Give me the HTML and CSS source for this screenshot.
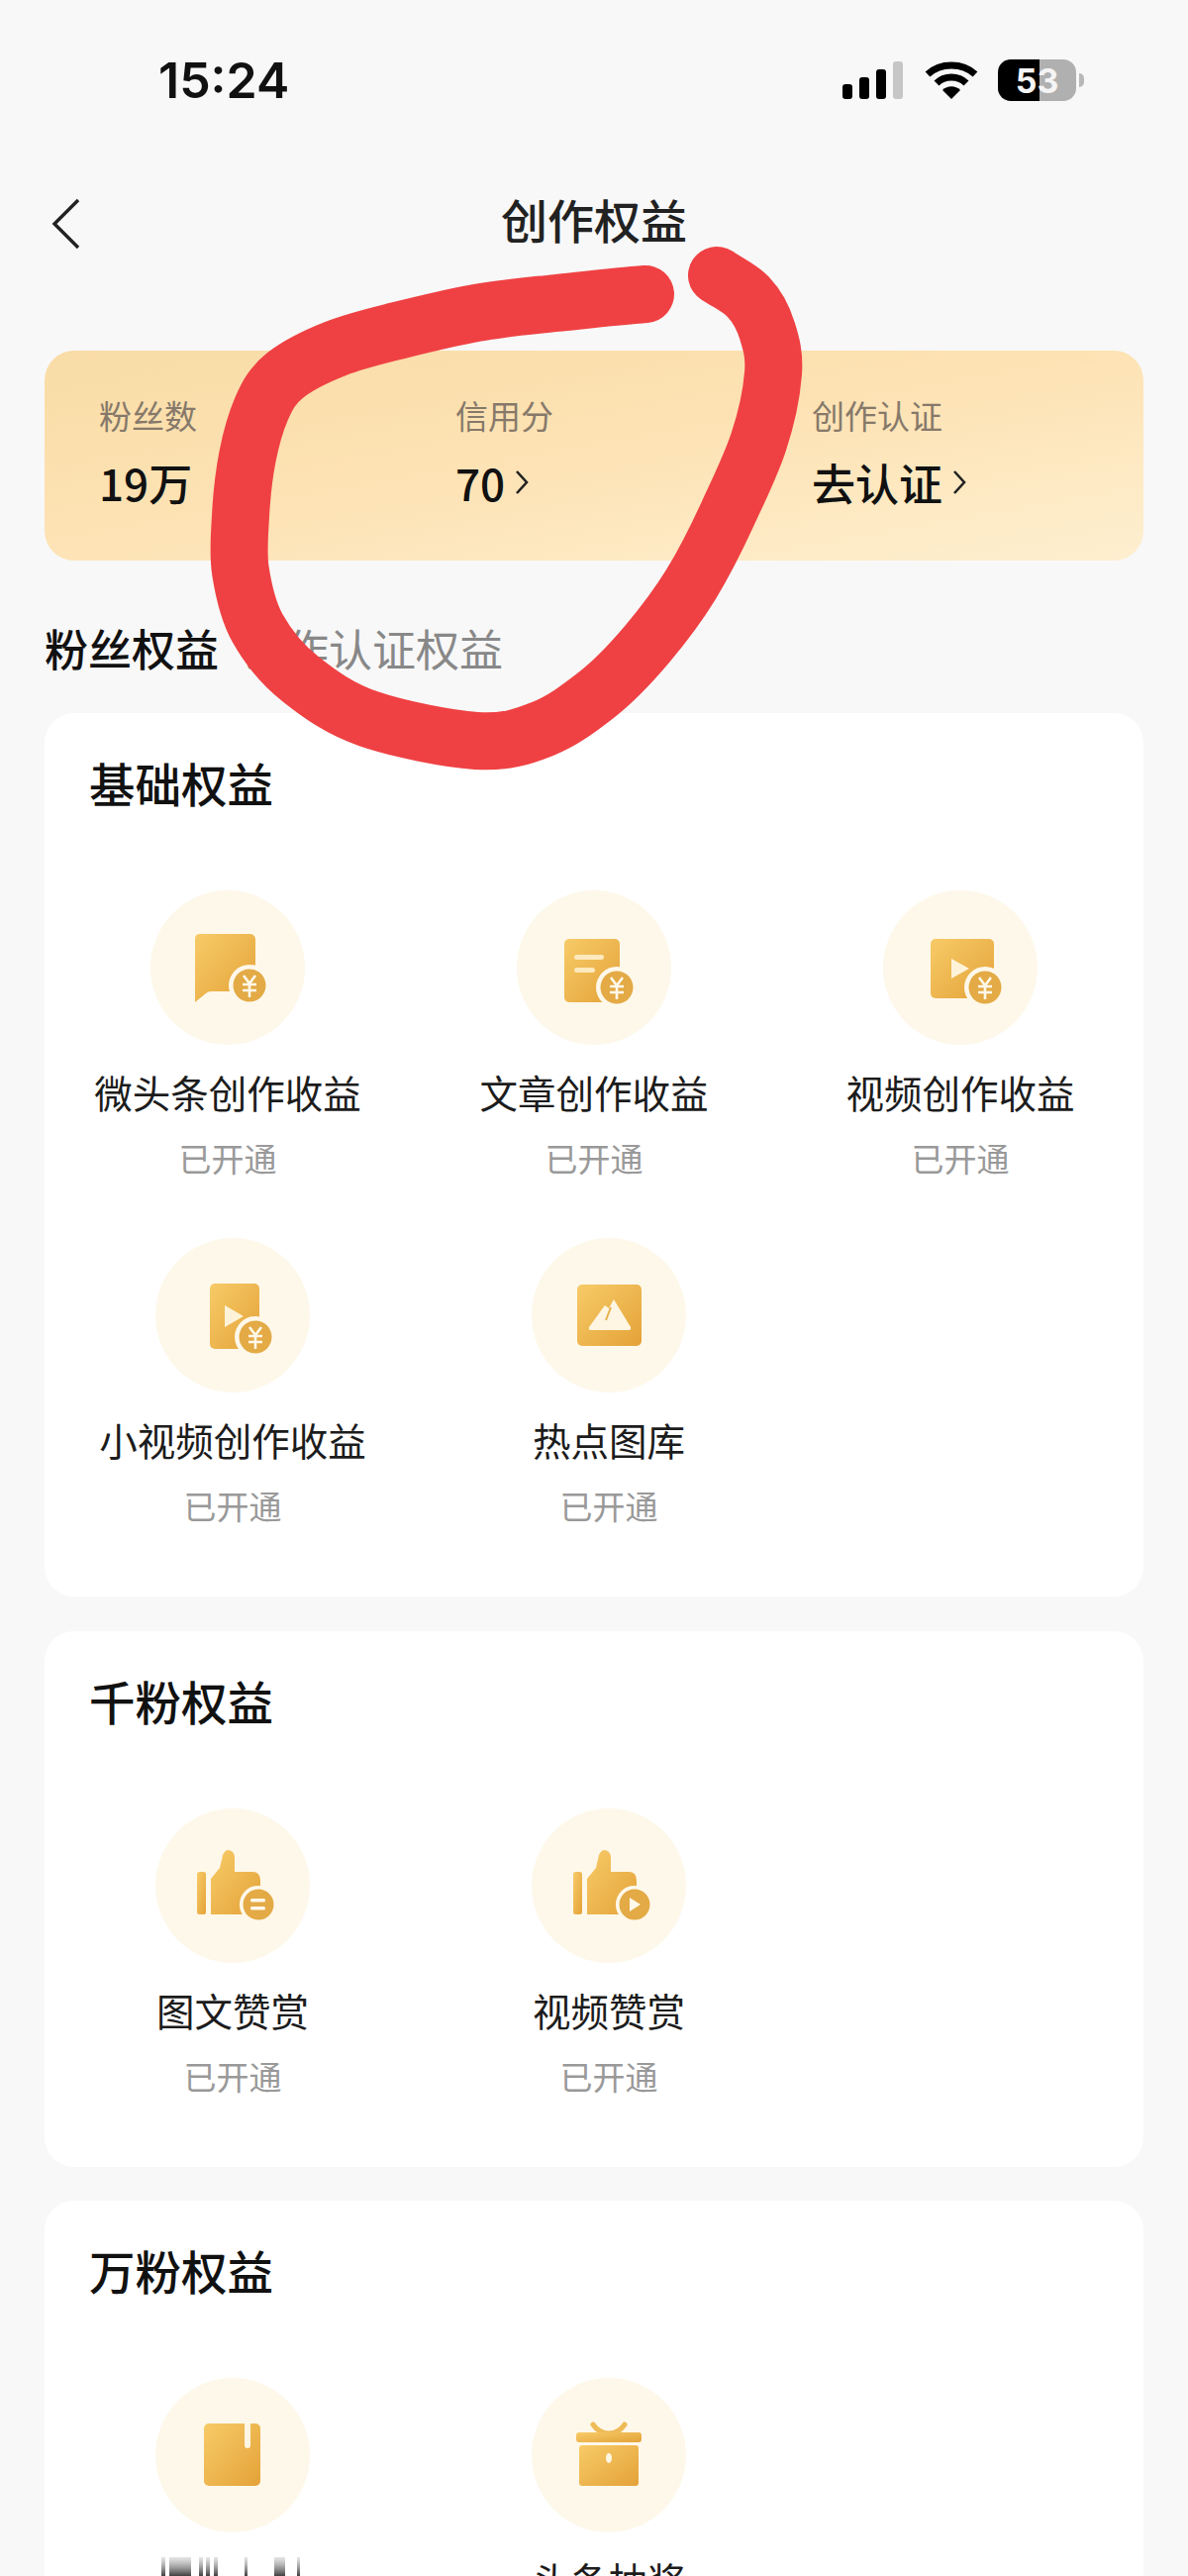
FILE: index.html

```html
<!DOCTYPE html>
<html lang="zh-CN">
<head>
<meta charset="UTF-8">
<meta name="viewport" content="width=device-width, initial-scale=1.0">
<title>创作权益</title>
<link rel="stylesheet" href="styles.css">
</head>
<body>

<svg class="defs" width="0" height="0">
    <defs>
        <linearGradient id="gold" x1="0" y1="0" x2="1" y2="1">
            <stop offset="0" stop-color="#f7cb68"/>
            <stop offset="1" stop-color="#e4a238"/>
        </linearGradient>
        <linearGradient id="smear" x1="0" y1="0" x2="0" y2="1">
            <stop offset="0" stop-color="#999" stop-opacity="0.25"/>
            <stop offset="1" stop-color="#333"/>
        </linearGradient>
        <symbol id="coinRing" viewBox="-22 -22 44 44">
            <circle r="21" fill="#fef8ea"/>
            <circle r="17" fill="#e3aa45"/>
        </symbol>
        <symbol id="coinYuan" viewBox="-22 -22 44 44">
            <circle r="21" fill="#fef8ea"/>
            <circle r="16.5" fill="#e3aa45"/>
            <path d="M-6 -10 L0 -2 L6 -10 M-7 -1 H7 M-7 5 H7 M0 -2 V12" fill="none" stroke="#fef8ea" stroke-width="2.6"/>
        </symbol>
    </defs>
</svg>

<div class="statusbar">
    <span class="time">15:24</span>
    <div class="status-icons">
        <svg class="signal" width="62" height="40" viewBox="0 0 62 40">
            <rect x="0" y="24" width="10" height="15" rx="3" fill="#000"/>
            <rect x="17" y="17" width="10" height="22" rx="3" fill="#000"/>
            <rect x="34" y="9" width="10" height="30" rx="3" fill="#000"/>
            <rect x="51" y="1" width="10" height="38" rx="3" fill="#c6c6c6"/>
        </svg>
        <svg class="wifi" width="54" height="40" viewBox="0 0 54 40">
            <path d="M3 14 C16 2 38 2 51 14" fill="none" stroke="#000" stroke-width="7"/>
            <path d="M12 23 C20 15 34 15 42 23" fill="none" stroke="#000" stroke-width="7"/>
            <path d="M18 30 C23 25 31 25 36 30 L27 39 Z" fill="#000"/>
        </svg>
        <div class="battery">
            <div class="battery-body"><span>53</span></div>
            <div class="battery-nub"></div>
        </div>
    </div>
</div>

<div class="nav">
    <svg class="back" width="30" height="52" viewBox="0 0 30 52">
        <path d="M27 2 L3 26 L27 50" fill="none" stroke="#222" stroke-width="3.4"/>
    </svg>
    <div class="nav-title">创作权益</div>
</div>

<div class="summary">
    <div class="summary-col">
        <div class="summary-label">粉丝数</div>
        <div class="summary-value">19万</div>
    </div>
    <div class="summary-col">
        <div class="summary-label">信用分</div>
        <div class="summary-value">70<svg class="more" width="16" height="28" viewBox="0 0 16 28"><path d="M3 3 L13 14 L3 25" fill="none" stroke="#222" stroke-width="2.6"/></svg></div>
    </div>
    <div class="summary-col">
        <div class="summary-label">创作认证</div>
        <div class="summary-value">去认证<svg class="more" width="16" height="28" viewBox="0 0 16 28"><path d="M3 3 L13 14 L3 25" fill="none" stroke="#222" stroke-width="2.6"/></svg></div>
    </div>
</div>

<div class="tabs">
    <span class="tab active">粉丝权益</span>
    <span class="tab">创作认证权益</span>
</div>

<div class="card">
    <div class="card-title">基础权益</div>
    <div class="grid three">
        <div class="item">
            <div class="icon"><svg width="156" height="156" viewBox="0 0 156 156">
                <path d="M50 44 H100 Q106 44 106 50 V98 Q106 102 102 102 H62 Q58 102 56 104 L45 113 V49 Q45 44 50 44 Z" fill="url(#gold)"/>
                <use href="#coinYuan" x="78" y="74" width="44" height="44"/>
            </svg></div>
            <div class="item-name">微头条创作收益</div>
            <div class="item-state">已开通</div>
        </div>
        <div class="item">
            <div class="icon"><svg width="156" height="156" viewBox="0 0 156 156">
                <rect x="48" y="49" width="56" height="64" rx="5" fill="url(#gold)"/>
                <rect x="58" y="65" width="30" height="5" rx="2.5" fill="#fde9bd"/>
                <rect x="58" y="78" width="21" height="5" rx="2.5" fill="#fde9bd"/>
                <use href="#coinYuan" x="79" y="76" width="44" height="44"/>
            </svg></div>
            <div class="item-name">文章创作收益</div>
            <div class="item-state">已开通</div>
        </div>
        <div class="item">
            <div class="icon"><svg width="156" height="156" viewBox="0 0 156 156">
                <rect x="48" y="49" width="64" height="60" rx="5" fill="url(#gold)"/>
                <path d="M69 69 L87 79 L69 89 Z" fill="#fef3d8"/>
                <use href="#coinYuan" x="81" y="76" width="44" height="44"/>
            </svg></div>
            <div class="item-name">视频创作收益</div>
            <div class="item-state">已开通</div>
        </div>
    </div>
    <div class="grid two">
        <div class="item">
            <div class="icon"><svg width="156" height="156" viewBox="0 0 156 156">
                <rect x="55" y="46" width="50" height="66" rx="5" fill="url(#gold)"/>
                <path d="M70 68 L89 79 L70 90 Z" fill="#fef3d8"/>
                <use href="#coinYuan" x="79" y="78" width="44" height="44"/>
            </svg></div>
            <div class="item-name">小视频创作收益</div>
            <div class="item-state">已开通</div>
        </div>
        <div class="item">
            <div class="icon"><svg width="156" height="156" viewBox="0 0 156 156">
                <rect x="46" y="47" width="65" height="62" rx="5" fill="url(#gold)"/>
                <path d="M83 62 L100 90 Q101 93 98 93 H60 Q57 93 58 90 L74 68 L78 71 Z" fill="#fef6e2"/>
                <path d="M80 70 L75 83" fill="none" stroke="#e9b04c" stroke-width="2"/>
            </svg></div>
            <div class="item-name">热点图库</div>
            <div class="item-state">已开通</div>
        </div>
    </div>
</div>

<div class="card">
    <div class="card-title">千粉权益</div>
    <div class="grid two">
        <div class="item">
            <div class="icon"><svg width="156" height="156" viewBox="0 0 156 156">
                <rect x="42" y="64" width="9" height="43" rx="2.5" fill="url(#gold)"/>
                <path d="M56 107 V71 L65 60 L68 47 Q70 42 74 42 Q80 43 80 50 V64 H98 Q106 64 106 73 V107 Z" fill="url(#gold)"/>
                <use href="#coinRing" x="84" y="77" width="40" height="40"/>
                <rect x="96" y="91" width="15" height="3.5" rx="1.5" fill="#fef8ea"/>
                <rect x="96" y="99" width="15" height="3.5" rx="1.5" fill="#fef8ea"/>
            </svg></div>
            <div class="item-name">图文赞赏</div>
            <div class="item-state">已开通</div>
        </div>
        <div class="item">
            <div class="icon"><svg width="156" height="156" viewBox="0 0 156 156">
                <rect x="42" y="64" width="9" height="43" rx="2.5" fill="url(#gold)"/>
                <path d="M56 107 V71 L65 60 L68 47 Q70 42 74 42 Q80 43 80 50 V64 H98 Q106 64 106 73 V107 Z" fill="url(#gold)"/>
                <use href="#coinRing" x="84" y="77" width="40" height="40"/>
                <path d="M99 90 L110 97 L99 104 Z" fill="#fef8ea"/>
            </svg></div>
            <div class="item-name">视频赞赏</div>
            <div class="item-state">已开通</div>
        </div>
    </div>
</div>

<div class="card last">
    <div class="card-title">万粉权益</div>
    <div class="grid two">
        <div class="item">
            <div class="icon"><svg width="156" height="156" viewBox="0 0 156 156">
                <rect x="49" y="46" width="57" height="63" rx="5" fill="url(#gold)"/>
                <path d="M90 46 H96 V68 Q96 71 93 71 Q90 71 90 68 Z" fill="#fef6e2"/>
            </svg></div>
            <!-- this label is smeared out in the screenshot, only streaks are left -->
            <svg class="smear" width="154" height="50" viewBox="0 0 154 50">
                <rect x="5" y="3" width="4" height="20" fill="url(#smear)"/>
                <rect x="13" y="3" width="22" height="20" fill="url(#smear)"/>
                <rect x="43" y="3" width="4" height="20" fill="url(#smear)"/>
                <rect x="50" y="3" width="4" height="20" fill="url(#smear)"/>
                <rect x="58" y="3" width="4" height="20" fill="url(#smear)"/>
                <rect x="89" y="3" width="3" height="20" fill="url(#smear)"/>
                <rect x="119" y="3" width="11" height="20" fill="url(#smear)"/>
                <rect x="142" y="3" width="3" height="20" fill="url(#smear)"/>
            </svg>
        </div>
        <div class="item">
            <div class="icon"><svg width="156" height="156" viewBox="0 0 156 156">
                <path d="M62 47 Q68 56 78 56 Q88 56 94 47" fill="none" stroke="#eebb58" stroke-width="5" stroke-linecap="round"/>
                <rect x="45" y="55" width="66" height="10" rx="3" fill="url(#gold)"/>
                <rect x="48" y="68" width="60" height="41" rx="3" fill="url(#gold)"/>
                <ellipse cx="78" cy="81" rx="3" ry="5" fill="#fef6e2"/>
            </svg></div>
            <div class="item-name">头条抽奖</div>
        </div>
    </div>
</div>

<!-- hand drawn circle over the screenshot -->
<svg class="scribble" width="1200" height="2601" viewBox="0 0 1200 2601">
    <path d="M652 297 C625 299 590.5 303 562 306 S508 311 481 316 S425 328 401 334 S358 344.5 339 352 S300.5 369 288 379 S270 399 264 413 S253.5 443 250 461 S244 502 243 521 S240 558 243 577 S250 616 260 634 S285 671 304 686 S343.5 716 373 726 S452 746 481 748 S528 744 548 736 S584 716 602 702 S638 669 654 650 S684.5 612 698 590 S724 543 735 519 S758 471 766 447 S779.5 396 781 377 S779 347 775 334 S764.5 309 756 300 S738 287 724 278" fill="none" stroke="#ef4143" stroke-width="58" stroke-linecap="round"/>
</svg>

</body>
</html>
```

FILE: styles.css

```css
html, body {
    margin: 0;
    padding: 0;
}

body {
    position: relative;
    width: 1200px;
    height: 2601px;
    overflow: hidden;
    background-color: #f8f8f8;
    color: #1c1c1c;
    font-family: "Noto Sans CJK SC", "Noto Sans", sans-serif;
}

.defs {
    display: block;
    height: 0;
}

/* status bar */
.statusbar {
    height: 162px;
    display: flex;
    align-items: center;
    justify-content: space-between;
    padding: 0 105px 0 160px;
    box-sizing: border-box;
}

.time {
    font-family: Inter, sans-serif;
    font-size: 50px;
    font-weight: 600;
    color: #111;
}

.status-icons {
    display: flex;
    align-items: center;
}

.signal {
    margin-right: 21px;
}

.wifi {
    margin-right: 20px;
}

.battery {
    display: flex;
    align-items: center;
}

.battery-body {
    width: 79px;
    height: 42px;
    border-radius: 13px;
    background: linear-gradient(90deg, #000 0, #000 53%, #b0b0b0 53%, #b0b0b0 100%);
    display: flex;
    align-items: center;
    justify-content: center;
    color: #f4f4f4;
    font-family: Inter, sans-serif;
    font-size: 34px;
    font-weight: 700;
}

.battery-nub {
    width: 5px;
    height: 14px;
    margin-left: 3px;
    border-radius: 0 5px 5px 0;
    background-color: #b8b8b8;
}

/* nav */
.nav {
    position: relative;
    height: 124px;
    box-sizing: border-box;
    padding-bottom: 6px;
    display: flex;
    align-items: center;
    justify-content: center;
}

.back {
    position: absolute;
    left: 52px;
    top: 38px;
}

.nav-title {
    font-size: 47px;
    line-height: 60px;
    font-weight: 500;
    color: #222;
}

/* summary card */
.summary {
    margin: 68px 45px 0;
    height: 212px;
    box-sizing: border-box;
    padding: 42px 0 0 55px;
    border-radius: 30px;
    background: linear-gradient(170deg, #f9dca6 0%, #fde3b5 50%, #feefd0 100%);
    display: grid;
    grid-template-columns: 360px 360px 1fr;
}

.summary-label {
    font-size: 33px;
    line-height: 46px;
    color: #86796a;
}

.summary-value {
    margin-top: 15px;
    font-size: 44px;
    line-height: 60px;
    font-weight: 500;
    color: #111;
    display: flex;
    align-items: center;
}

.more {
    margin-left: 9px;
}

/* tabs */
.tabs {
    margin: 58px 45px 0;
    display: flex;
    gap: 23px;
    height: 60px;
    align-items: center;
}

.tab {
    font-size: 44px;
    color: #888;
}

.tab.active {
    font-weight: 500;
    color: #111;
}

/* cards */
.card {
    margin: 36px 45px 0;
    padding: 47px 0 70px;
    border-radius: 30px;
    background-color: #fff;
}

.card + .card {
    margin-top: 35px;
}

.card.last {
    margin-top: 34px;
}

.card-title {
    padding-left: 45px;
    font-size: 46.5px;
    line-height: 46px;
    font-weight: 500;
    color: #111;
}

.grid {
    display: grid;
    margin-top: 86px;
}

.grid.three {
    grid-template-columns: repeat(3, 370px);
}

.grid.two {
    grid-template-columns: 380px 380px;
}

.grid + .grid {
    margin-top: 59px;
}

.item {
    display: flex;
    flex-direction: column;
    align-items: center;
}

.icon {
    width: 156px;
    height: 156px;
    border-radius: 50%;
    background-color: #fef8ea;
}

.icon svg {
    display: block;
}

.item-name {
    margin-top: 22px;
    font-size: 38.5px;
    line-height: 50px;
    color: #1c1c1c;
    white-space: nowrap;
}

.smear {
    display: block;
    margin-top: 22px;
}

.item-state {
    margin-top: 20px;
    font-size: 33px;
    line-height: 44px;
    color: #999;
}

/* the circle on top */
.scribble {
    position: absolute;
    left: 0;
    top: 0;
    pointer-events: none;
}
```
